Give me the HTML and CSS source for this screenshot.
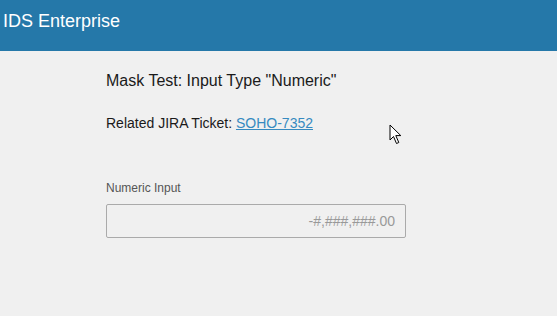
FILE: index.html
```html
<!DOCTYPE html>
<html lang="en">

<head>
    <meta charset="UTF-8">
    <meta name="viewport" content="width=device-width, initial-scale=1.0">
    <title>Mask Test: Numeric</title>
    <link rel="stylesheet" href="styles.css">
</head>

<body>
    <header class="header">
        <h1 class="header-title">IDS Enterprise</h1>
    </header>

    <main class="page">
        <h2 class="page-title">Mask Test: Input Type "Numeric"</h2>
        <p class="related">Related JIRA Ticket: <a href="#" class="ticket">SOHO-7352</a></p>

        <div class="field">
            <label class="field-label" for="numeric">Numeric Input</label>
            <input type="text" id="numeric" class="field-input" placeholder="-#,###,###.00">
        </div>
    </main>

    <!-- mouse pointer -->
    <svg class="pointer" width="14" height="22" viewBox="0 0 14 22">
        <path d="M1 1 L1 16 L4.5 12.5 L7.5 19.5 L9.8 18.5 L6.8 11.6 L11.8 11.6 Z" fill="#fff" stroke="#000" stroke-width="1" stroke-linejoin="miter"/>
    </svg>
</body>

</html>
```

FILE: styles.css
```css
/* styles.css */

body {
    margin: 0;
    background-color: #f0f0f0;
    font-family: "Liberation Sans", Arial, sans-serif;
    color: #1a1a1a;
}

.header {
    height: 51px;
    background-color: #2578a9;
    display: flex;
    align-items: flex-start;
}

.header-title {
    margin: 10px 0 0 3px;
    font-size: 18px;
    font-weight: normal;
    line-height: 22px;
    color: #fff;
}

.page {
    padding: 20px 0 0 106px;
}

.page-title {
    margin: 0;
    font-size: 16px;
    font-weight: normal;
    line-height: 20px;
    color: #1a1a1a;
}

.related {
    margin: 24px 0 0;
    font-size: 14px;
    line-height: 17px;
    color: #1a1a1a;
}

.ticket {
    color: #368ac0;
}

.field {
    margin-top: 49px;
    display: flex;
    flex-direction: column;
}

.field-label {
    font-size: 12px;
    line-height: 14px;
    color: #555;
    margin-bottom: 9px;
}

.field-input {
    box-sizing: border-box;
    width: 300px;
    height: 34px;
    padding: 0 10px;
    border: 1px solid #aaa;
    border-radius: 2px;
    background-color: #f0f0f0;
    font-family: "Liberation Sans", Arial, sans-serif;
    font-size: 14px;
    text-align: right;
    color: #1a1a1a;
}

.field-input::placeholder {
    color: #999;
}

.pointer {
    position: absolute;
    left: 389px;
    top: 124px;
}
```
